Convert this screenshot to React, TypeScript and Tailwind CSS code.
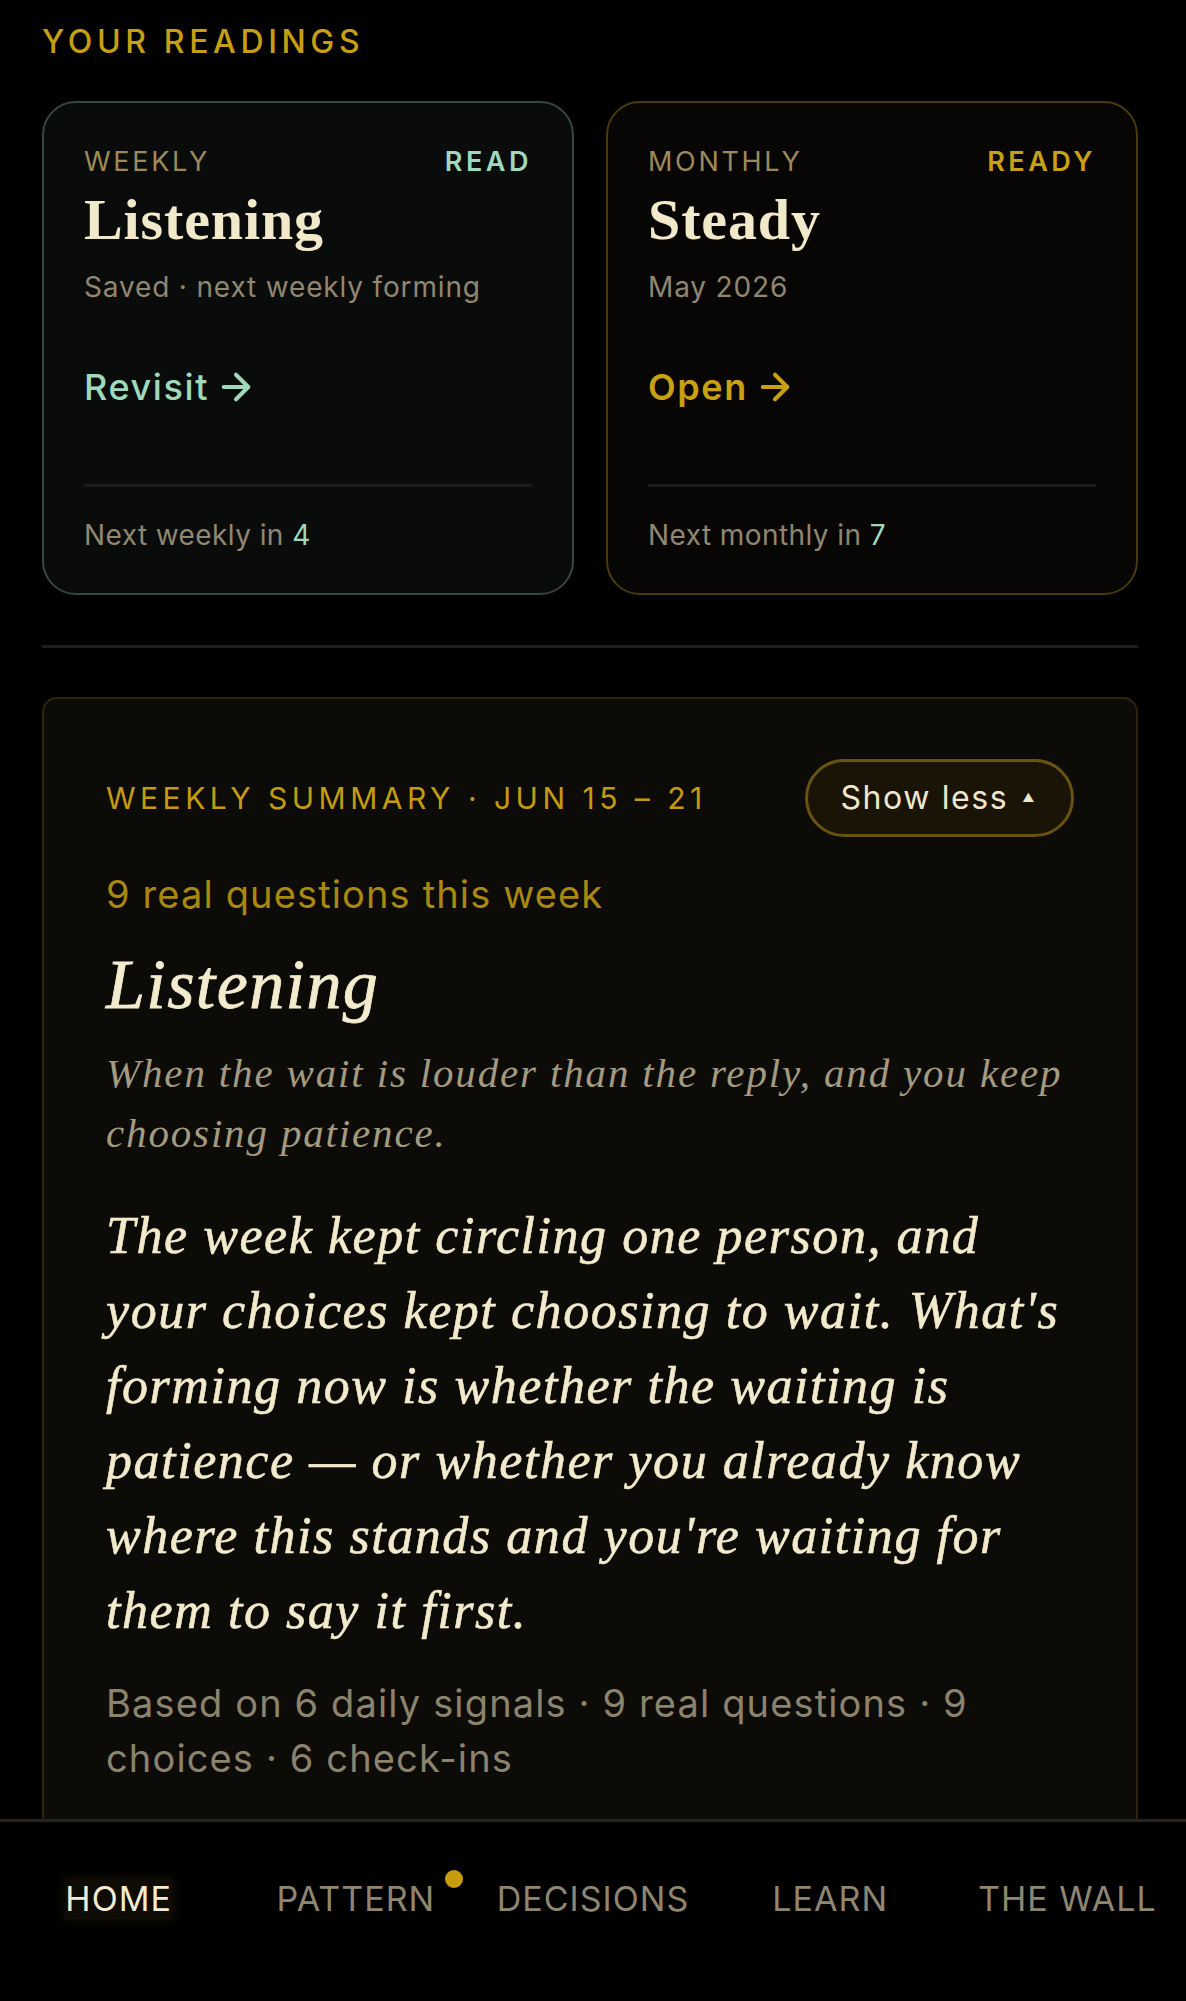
import { ArrowRight } from "lucide-react";

const sans = "font-['Inter','Noto_Sans',sans-serif]";
const serif = "font-['Liberation_Serif','DejaVu_Serif',serif]";

interface ReadingCardProps {
  kind: string;
  status: string;
  title: string;
  subtitle: string;
  action: string;
  footer: string;
  count: number;
  tone: "mint" | "gold";
}

function ReadingCard({ kind, status, title, subtitle, action, footer, count, tone }: ReadingCardProps) {
  const mint = tone === "mint";
  return (
    <div
      className={`rounded-[34px] border-2 px-[40px] pt-[43px] pb-[40px] ${
        mint ? "border-[#36473d] bg-[#0a0c0b]" : "border-[#4a3a0b] bg-[#080604]"
      }`}
    >
      <div className="flex items-center justify-between">
        <span className={`${sans} text-[27px] leading-[32px] tracking-[0.1em] text-[#9d8a58]`}>{kind}</span>
        <span
          className={`${sans} text-[27px] leading-[32px] font-semibold tracking-[0.13em] ${
            mint ? "text-[#9fd9bd]" : "text-[#c9a012]"
          }`}
        >
          {status}
        </span>
      </div>
      <h3 className={`${serif} mt-[10px] text-[58px] leading-[64px] font-bold tracking-[0.015em] text-[#f1e9c9]`}>
        {title}
      </h3>
      <p className={`${sans} mt-[17px] text-[28px] leading-[36px] tracking-[0.03em] text-[#918670]`}>{subtitle}</p>
      <div
        className={`${sans} mt-[60px] flex items-center gap-[12px] text-[36px] leading-[44px] tracking-[0.045em] ${
          mint ? "font-medium text-[#9fd9bc]" : "font-semibold text-[#c9a012]"
        }`}
      >
        <span>{action}</span>
        <ArrowRight size={42} strokeWidth={2.3} className="-my-[10px] -ml-[6px]" />
      </div>
      <div className="mt-[75px] h-[3px] bg-[#1b1c1b]" />
      <p className={`${sans} mt-[30px] text-[28px] leading-[36px] tracking-[0.015em] text-[#918670]`}>
        {footer} <span className="text-[#9fd9bc]">{count}</span>
      </p>
    </div>
  );
}

const tabs = ["HOME", "PATTERN", "DECISIONS", "LEARN", "THE WALL"];

export default function App() {
  return (
    <div className="flex h-[2001px] w-full flex-col overflow-hidden bg-black">
      <main className="flex-1 overflow-hidden pl-[42px] pr-[48px] pt-[22px]">
        <h2 className={`${sans} text-[32px] leading-[40px] font-medium tracking-[0.145em] text-[#c99f12]`}>
          YOUR READINGS
        </h2>

        <div className="mt-[39px] grid grid-cols-2 gap-[32px]">
          <ReadingCard
            kind="WEEKLY"
            status="READ"
            title="Listening"
            subtitle="Saved · next weekly forming"
            action="Revisit"
            footer="Next weekly in"
            count={4}
            tone="mint"
          />
          <ReadingCard
            kind="MONTHLY"
            status="READY"
            title="Steady"
            subtitle="May 2026"
            action="Open"
            footer="Next monthly in"
            count={7}
            tone="gold"
          />
        </div>

        <div className="mt-[50px] h-[3px] bg-[#1c1c1c]" />

        {/* weekly summary, expanded */}
        <section className="mt-[49px] rounded-[15px] border-2 border-[#2e2509] bg-[#0d0b07] px-[62px] pt-[60px] pb-[60px]">
          <div className="flex items-center justify-between">
            <span className={`${sans} text-[30px] leading-[36px] tracking-[0.15em] text-[#c49b10]`}>
              WEEKLY SUMMARY · JUN 15 – 21
            </span>
            <button
              className={`${sans} flex h-[78px] items-center gap-[14px] rounded-full border-[3px] border-[#6a5311] bg-[#1a1406] pl-[32px] pr-[35px] text-[32px] tracking-[0.05em] text-[#efe7cc]`}
            >
              Show less
              <span className="text-[12px] leading-none">▲</span>
            </button>
          </div>

          <p className={`${sans} mt-[33px] text-[38px] leading-[48px] tracking-[0.03em] text-[#a8880f]`}>
            9 real questions this week
          </p>

          <h3
            className={`${serif} mt-[27px] text-[70px] leading-[80px] italic tracking-[0.02em] text-[#f3ebcd] [-webkit-text-stroke:0.8px_#f3ebcd]`}
          >
            Listening
          </h3>

          <p className={`${serif} mt-[18px] text-[41px] leading-[60px] italic tracking-[0.045em] text-[#a39a80]`}>
            When the wait is louder than the reply, and you keep choosing patience.
          </p>

          <p
            className={`${serif} mt-[35px] text-[52px] leading-[75px] italic tracking-[0.03em] text-[#f2eacb] [-webkit-text-stroke:0.6px_#f2eacb]`}
          >
            The week kept circling one person, and your choices kept choosing to wait. What's forming now is
            whether the waiting is patience — or whether you already know where this stands and you're waiting
            for them to say it first.
          </p>

          <p className={`${sans} mt-[28px] text-[38px] leading-[55px] tracking-[0.03em] text-[#8b836c]`}>
            Based on 6 daily signals · 9 real questions · 9 choices · 6 check-ins
          </p>
        </section>
      </main>

      <nav className="flex h-[182px] shrink-0 items-start border-t-[3px] border-[#29231c] bg-black pt-[57px]">
        {tabs.map((tab) => (
          <div key={tab} className="flex flex-1 items-start justify-center">
            <span
              className={`${sans} relative text-[34px] leading-[40px] tracking-[0.03em] ${
                tab === "HOME"
                  ? "bg-[#0f0b05] text-[#f3ecd0] shadow-[0_0_8px_3px_#0f0b05]"
                  : "text-[#8f8670]"
              }`}
            >
              {tab}
              {tab === "PATTERN" && (
                <span className="absolute -right-[28px] -top-[9px] h-[18px] w-[18px] rounded-full bg-[#c99c0e]" />
              )}
            </span>
          </div>
        ))}
      </nav>
    </div>
  );
}
